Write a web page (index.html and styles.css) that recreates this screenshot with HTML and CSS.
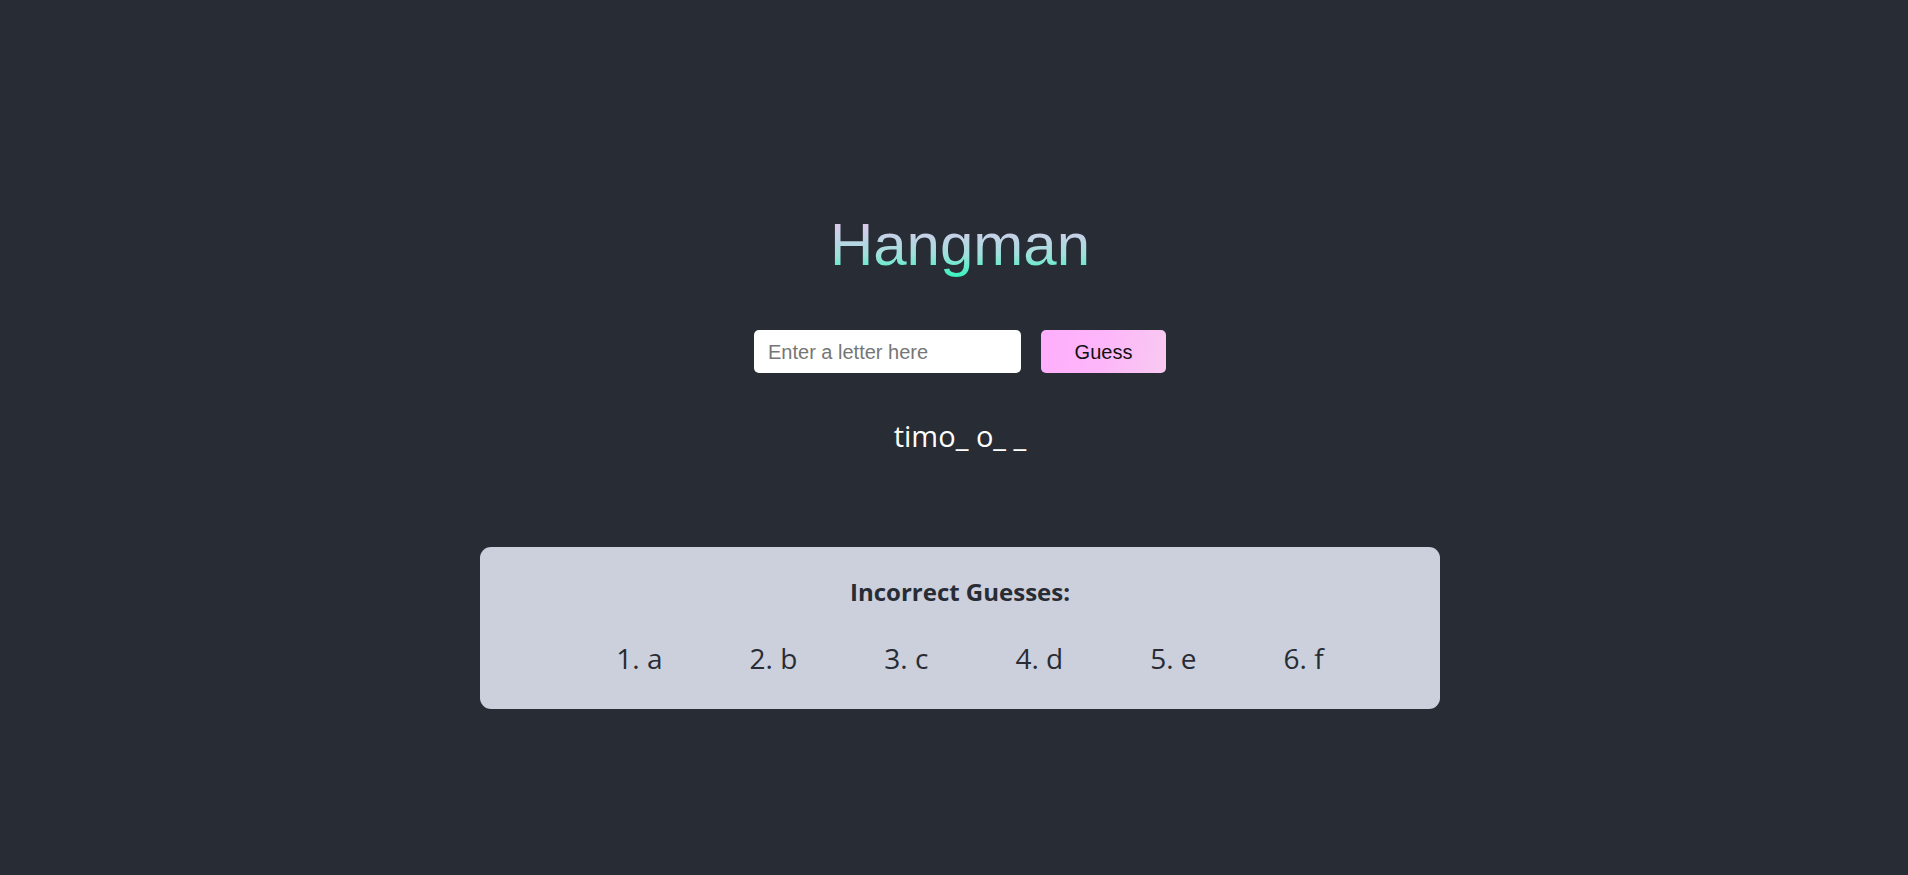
FILE: index.html
```html
<!DOCTYPE html>
<html lang="en">
<head>
<meta charset="utf-8">
<title>Hangman</title>
<link rel="stylesheet" href="styles.css">
</head>
<body>
<main class="app">
  <h1 class="title">Hangman</h1>
  <form class="guess-form">
    <input class="guess-input" type="text" placeholder="Enter a letter here">
    <button class="guess-btn" type="button">Guess</button>
  </form>
  <p class="word">timo_ o_ _</p>
  <section class="panel">
    <h3 class="panel-title">Incorrect Guesses:</h3>
    <ul class="misses">
      <li>1. a</li>
      <li>2. b</li>
      <li>3. c</li>
      <li>4. d</li>
      <li>5. e</li>
      <li>6. f</li>
    </ul>
  </section>
</main>
</body>
</html>
```

FILE: styles.css
```css
html, body {
  margin: 0;
  padding: 0;
  background: #282c34;
  height: 100%;
}

.app {
  box-sizing: border-box;
  padding-left: 12px;
  padding-top: 210px;
  display: flex;
  flex-direction: column;
  align-items: center;
  font-family: "Open Sans", "Noto Sans", sans-serif;
}

.title {
  margin: 0;
  font-family: "Liberation Sans", Arial, sans-serif;
  font-weight: 400;
  font-size: 60px;
  line-height: 69px;
  background: linear-gradient(to bottom, #f4bdf0 0%, #c8d0e8 35%, #9fe0dc 65%, #2ff5bd 100%);
  -webkit-background-clip: text;
  background-clip: text;
  color: transparent;
}

.guess-form {
  margin-top: 51px;
  display: flex;
  gap: 20px;
}

.guess-input {
  box-sizing: border-box;
  width: 267px;
  height: 43px;
  border: none;
  border-radius: 5px;
  padding: 2px 14px 0;
  font-family: "Liberation Sans", Arial, sans-serif;
  font-size: 20px;
  background: #fff;
  outline: none;
}

.guess-input::placeholder {
  color: #767676;
}

.guess-btn {
  box-sizing: border-box;
  width: 125px;
  height: 43px;
  border: none;
  border-radius: 5px;
  padding: 2px 0 0;
  font-family: "Liberation Sans", Arial, sans-serif;
  font-size: 20px;
  color: #111;
  background: linear-gradient(100deg, #ffaefc 0%, #fdb6f9 50%, #f8caf1 100%);
}

.word {
  margin: 43px 0 0;
  color: #ffffff;
  font-size: 29px;
  line-height: 40px;
}

.panel {
  box-sizing: border-box;
  margin-top: 91px;
  width: 960px;
  height: 162px;
  border-radius: 11px;
  background: #cbd0dc;
  color: #282c34;
  padding-top: 28px;
  display: flex;
  flex-direction: column;
  align-items: center;
}

.panel-title {
  margin: 0;
  font-size: 24px;
  font-weight: 700;
  line-height: 33px;
}

.misses {
  margin: 31px 0 0;
  padding: 0 0 0 20px;
  list-style: none;
  display: flex;
  gap: 87px;
  font-size: 28px;
  line-height: 38px;
}
```
